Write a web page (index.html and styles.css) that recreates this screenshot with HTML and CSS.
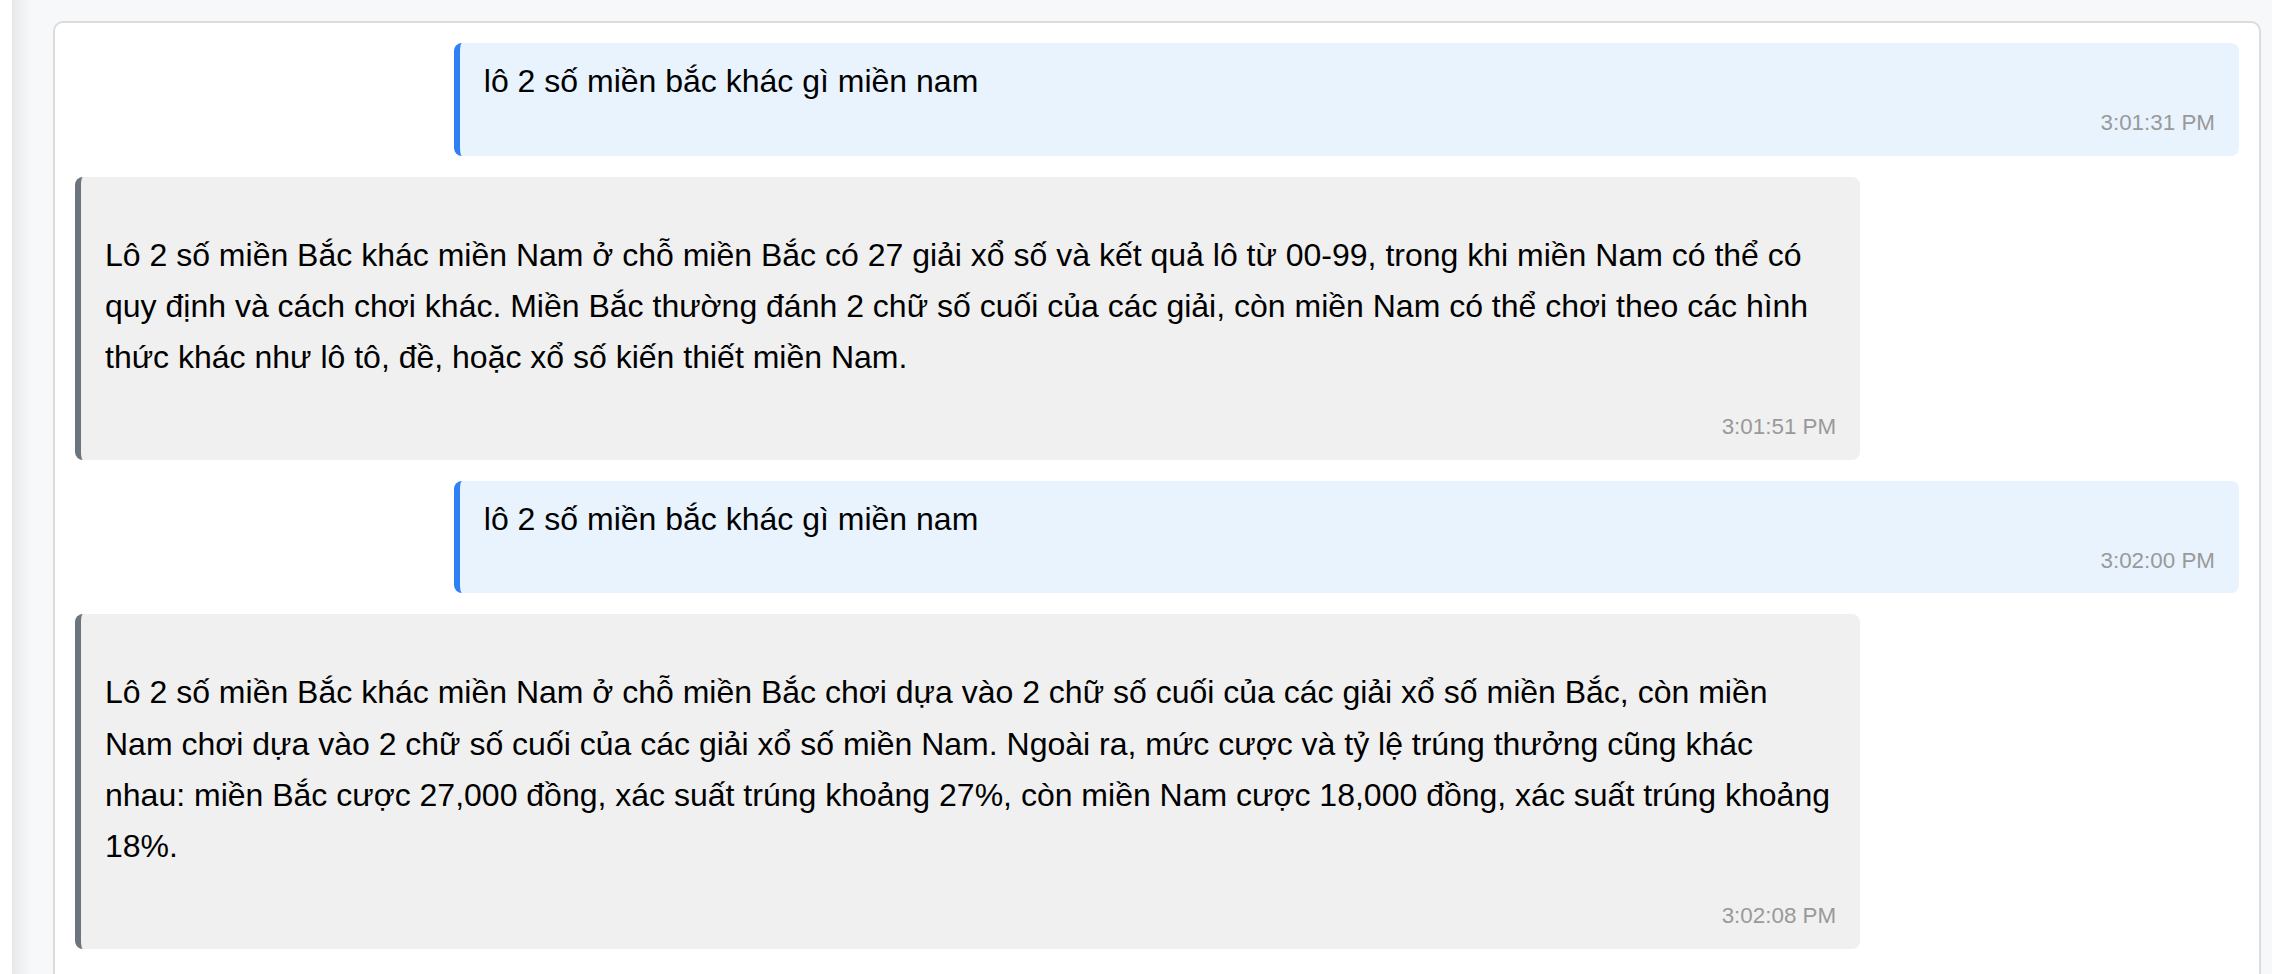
FILE: index.html
```html
<!DOCTYPE html>
<html lang="vi">
<head>
<meta charset="utf-8">
<title>Chat</title>
<link rel="stylesheet" href="styles.css">
</head>
<body>
<div class="shell">
  <main class="panel">
    <section class="chat-card">
      <div class="msg msg-user">
        <div class="msg-text">lô 2 số miền bắc khác gì miền nam</div>
        <div class="msg-time">3:01:31 PM</div>
      </div>
      <div class="msg msg-bot">
        <div class="msg-body"><p>Lô 2 số miền Bắc khác miền Nam ở chỗ miền Bắc có 27 giải xổ số và kết quả lô từ 00-99, trong khi miền Nam có thể có quy định và cách chơi khác. Miền Bắc thường đánh 2 chữ số cuối của các giải, còn miền Nam có thể chơi theo các hình thức khác như lô tô, đề, hoặc xổ số kiến thiết miền Nam.</p></div>
        <div class="msg-time">3:01:51 PM</div>
      </div>
      <div class="msg msg-user">
        <div class="msg-text">lô 2 số miền bắc khác gì miền nam</div>
        <div class="msg-time">3:02:00 PM</div>
      </div>
      <div class="msg msg-bot">
        <div class="msg-body"><p>Lô 2 số miền Bắc khác miền Nam ở chỗ miền Bắc chơi dựa vào 2 chữ số cuối của các giải xổ số miền Bắc, còn miền Nam chơi dựa vào 2 chữ số cuối của các giải xổ số miền Nam. Ngoài ra, mức cược và tỷ lệ trúng thưởng cũng khác nhau: miền Bắc cược 27,000 đồng, xác suất trúng khoảng 27%, còn miền Nam cược 18,000 đồng, xác suất trúng khoảng 18%.</p></div>
        <div class="msg-time">3:02:08 PM</div>
      </div>
    </section>
  </main>
</div>
</body>
</html>
```

FILE: styles.css
```css
html, body {
  margin: 0;
  padding: 0;
  height: 974px;
  overflow: hidden;
  background: #ffffff;
  font-family: "Liberation Sans", Arial, sans-serif;
  color: #000;
}

.shell {
  height: 974px;
  padding-left: 12px;
  display: flex;
}

.panel {
  flex: 1;
  background: linear-gradient(to right, #e6e7e9 0, #eff0f2 8px, #f7f8fa 20px, #f7f8fa 100%);
  padding: 21px 11px 0 41px;
  overflow: hidden;
}

.chat-card {
  background: #ffffff;
  border: 2px solid #dcdcdc;
  border-radius: 10px;
  padding: 20px 20px 40px;
  display: flex;
  flex-direction: column;
  gap: 21px;
  min-height: 1100px;
}

.msg {
  width: 80%;
  padding: 20px 24px;
  border-left: 6px solid;
  border-radius: 8px;
  font-size: 32px;
}

.msg-user {
  align-self: flex-end;
  background: #e9f3fd;
  border-left-color: #2f7ff5;
}

.msg-bot {
  align-self: flex-start;
  background: #f0f0f0;
  border-left-color: #6c757d;
}

.msg-text {
  line-height: 1.15;
}

.msg-body p {
  margin: 33px 0 31px;
  line-height: 1.6;
}

.msg-time {
  margin-top: 10px;
  font-size: 22.4px;
  line-height: 1.15;
  color: #999999;
  text-align: right;
}
```
